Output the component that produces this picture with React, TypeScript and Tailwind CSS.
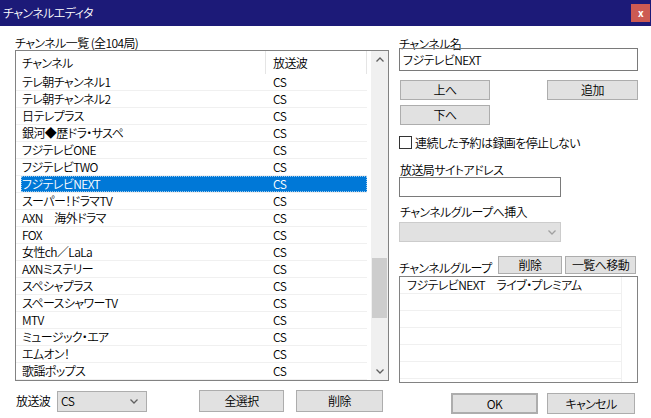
import React from 'react';

const channels = [
  'テレ朝チャンネル1',
  'テレ朝チャンネル2',
  '日テレプラス',
  '銀河◆歴ドラ・サスペ',
  'フジテレビONE',
  'フジテレビTWO',
  'フジテレビNEXT',
  'スーパー！ドラマTV',
  'AXN　海外ドラマ',
  'FOX',
  '女性ch／LaLa',
  'AXNミステリー',
  'スペシャプラス',
  'スペースシャワーTV',
  'MTV',
  'ミュージック・エア',
  'エムオン！',
  '歌謡ポップス',
];

const SELECTED = 6;

function Chevron({ up, color = '#606060' }: { up?: boolean; color?: string }) {
  return (
    <svg width="8" height="5" viewBox="0 0 8 5">
      <polyline
        points={up ? '0.5,4.5 4,1 7.5,4.5' : '0.5,0.5 4,4 7.5,0.5'}
        fill="none"
        stroke={color}
        strokeWidth="1.3"
      />
    </svg>
  );
}

function Button({ label, className = '' }: { label: string; className?: string }) {
  return (
    <div
      className={`flex items-center justify-center border border-[#adadad] bg-[#e1e1e1] leading-none ${className}`}
    >
      {label}
    </div>
  );
}

export default function App() {
  return (
    <div
      className="flex h-[418px] w-[651px] flex-col overflow-hidden bg-white text-[12px] font-[350] tracking-[-0.6px] text-black [font-feature-settings:'palt']"
      style={{ fontFamily: '"Noto Sans CJK JP", "Noto Sans", sans-serif' }}
    >
      {/* Title bar */}
      <div className="flex h-[26px] shrink-0 items-center justify-between bg-[#1c1a78] pl-[3px] pr-[1px]">
        <span className="text-[12px] leading-none text-white">チャンネルエディタ</span>
        <div className="flex h-[18px] w-[19px] items-center justify-center bg-[#cd5a52] text-[10px] font-bold leading-none text-white">
          x
        </div>
      </div>

      <div className="flex pl-[15px] pt-[10px]">
        {/* Left column */}
        <div className="flex w-[374px] flex-col">
          <div className="h-[14px] leading-[13px]">チャンネル一覧 (全104局)</div>

          <div className="flex h-[331px] border border-[#828282]">
            <div className="flex w-[354px] flex-col">
              {/* Header */}
              <div className="flex h-[23px] items-center">
                <div className="flex h-full w-[250px] items-center border-r border-[#e5e5e5] pl-[6px]">チャンネル</div>
                <div className="flex h-full w-[101px] items-center border-r border-[#e5e5e5] pl-[7px]">放送波</div>
              </div>
              {channels.map((name, i) => (
                <div key={name} className="flex h-[17px] w-[351px] border-b border-[#f0f0f0]">
                  <div
                    className={`ml-[5px] flex flex-1 items-center leading-[16px] ${
                      i === SELECTED ? 'bg-[#0078d7] text-white outline-1 outline-dotted outline-offset-[-1px] outline-[#99c9ef]' : ''
                    }`}
                  >
                    <div className="w-[245px] truncate pl-[1px]">{name}</div>
                    <div className="pl-[7px]">CS</div>
                  </div>
                </div>
              ))}
            </div>
            {/* Scrollbar */}
            <div className="ml-auto flex w-[17px] flex-col bg-[#f0f0f0]">
              <div className="flex h-[17px] items-center justify-center">
                <Chevron up />
              </div>
              <div className="mx-[1px] mt-[190px] h-[60px] bg-[#cdcdcd]" />
              <div className="flex-1" />
              <div className="flex h-[17px] items-center justify-center">
                <Chevron />
              </div>
            </div>
          </div>

          <div className="mt-[9px] flex h-[22px] items-center">
            <div className="w-[42px] pl-[1px]">放送波</div>
            <div className="flex h-[21px] w-[90px] items-center justify-between border border-[#adadad] bg-[#e1e1e1] pl-[3px] pr-[8px]">
              <span>CS</span>
              <Chevron />
            </div>
            <Button label="全選択" className="ml-[52px] h-[22px] w-[85px]" />
            <Button label="削除" className="ml-[12px] h-[22px] w-[87px]" />
          </div>
        </div>

        {/* Right column */}
        <div className="ml-[10px] flex w-[239px] flex-col">
          <div className="h-[12px] leading-[15px]">チャンネル名</div>
          <div className="flex h-[23px] items-center border border-[#7a7a7a] pl-[3px]">フジテレビNEXT</div>

          <div className="mt-[9px] flex h-[20px]">
            <Button label="上へ" className="ml-[1px] w-[90px]" />
            <Button label="追加" className="ml-auto w-[91px]" />
          </div>
          <div className="mt-[5px] flex h-[20px]">
            <Button label="下へ" className="ml-[1px] w-[90px]" />
          </div>

          <div className="mt-[11px] flex h-[13px] items-center">
            <div className="h-[13px] w-[13px] border border-[#333333] bg-white" />
            <span className="ml-[3px] leading-none">連続した予約は録画を停止しない</span>
          </div>

          <div className="mt-[14px] h-[14px] pl-[1px] leading-[14px]">放送局サイトアドレス</div>
          <div className="h-[20px] w-[162px] border border-[#7a7a7a]" />

          <div className="mt-[8px] h-[14px] pl-[1px] leading-[14px]">チャンネルグループへ挿入</div>
          <div className="mt-[3px] flex h-[20px] w-[162px] items-center justify-end border border-[#cccccc] bg-[#e1e1e1] pr-[4px]">
            <Chevron color="#a0a0a0" />
          </div>

          <div className="mt-[13px] flex h-[20px]">
            <div className="self-end leading-[14px]">チャンネルグループ</div>
            <Button label="削除" className="ml-auto mt-[1px] h-[18px] w-[64px]" />
            <Button label="一覧へ移動" className="ml-[3px] mr-[2px] mt-[1px] h-[18px] w-[71px]" />
          </div>
          <div className="mt-[1px] flex h-[107px] flex-col border border-[#828282]">
            {[0, 1, 2, 3, 4, 5].map((i) => (
              <div key={i} className="flex h-[17px] w-[222px] shrink-0 border-b border-r border-[#f0f0f0]">
                <span className="pl-[7px] leading-[16px]">{i === 0 ? 'フジテレビNEXT　ライブ・プレミアム' : ''}</span>
              </div>
            ))}
            <div className="w-[222px] flex-1 border-r border-[#f0f0f0]" />
          </div>

          <div className="mt-[10px] flex h-[21px]">
            <Button label="OK" className="ml-[52px] w-[87px] border-2 border-[#0078d7]" />
            <Button label="キャンセル" className="ml-[9px] w-[88px]" />
          </div>
        </div>
      </div>
    </div>
  );
}
